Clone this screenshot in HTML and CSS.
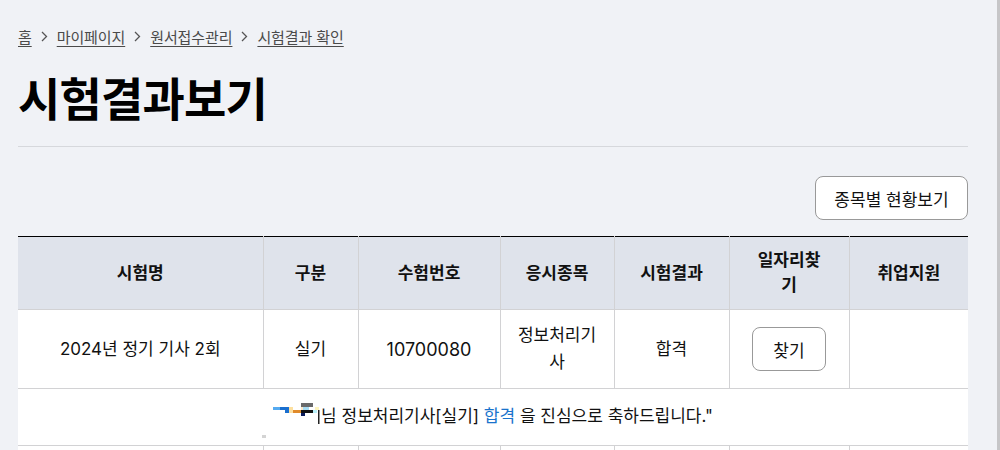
FILE: index.html
```html
<!DOCTYPE html>
<html lang="ko">
<head>
  <meta charset="UTF-8">
  <title>시험결과보기</title>
  <link rel="stylesheet" href="styles.css">
</head>
<body>
<div class="page">
  <div class="container">
    <nav class="breadcrumb">
      <a href="#">홈</a>
      <svg class="chevron" width="7" height="11" viewBox="0 0 7 11"><path d="M1 1l4.5 4.5L1 10" fill="none" stroke="#555" stroke-width="1.3"/></svg>
      <a href="#">마이페이지</a>
      <svg class="chevron" width="7" height="11" viewBox="0 0 7 11"><path d="M1 1l4.5 4.5L1 10" fill="none" stroke="#555" stroke-width="1.3"/></svg>
      <a href="#">원서접수관리</a>
      <svg class="chevron" width="7" height="11" viewBox="0 0 7 11"><path d="M1 1l4.5 4.5L1 10" fill="none" stroke="#555" stroke-width="1.3"/></svg>
      <a href="#">시험결과 확인</a>
    </nav>

    <h1 class="title">시험결과보기</h1>

    <div class="toolbar">
      <button class="btn">종목별 현황보기</button>
    </div>

    <table class="result-table">
      <colgroup>
        <col style="width:245px">
        <col style="width:95px">
        <col style="width:142px">
        <col style="width:114px">
        <col style="width:115px">
        <col style="width:120px">
        <col style="width:119px">
      </colgroup>
      <thead>
        <tr>
          <th>시험명</th>
          <th>구분</th>
          <th>수험번호</th>
          <th>응시종목</th>
          <th>시험결과</th>
          <th>일자리찾기</th>
          <th>취업지원</th>
        </tr>
      </thead>
      <tbody>
        <tr>
          <td>2024년 정기 기사 2회</td>
          <td>실기</td>
          <td class="num">10700080</td>
          <td>정보처리기사</td>
          <td>합격</td>
          <td><button class="btn btn-small">찾기</button></td>
          <td></td>
        </tr>
        <tr>
          <td colspan="7" class="message">
            <svg class="name-mask" width="48" height="26" viewBox="0 0 48 26">
              <rect x="0" y="4" width="7" height="3" fill="#55aaf0"/>
              <rect x="7" y="4" width="9" height="3" fill="#1a6fcf"/>
              <rect x="12" y="7" width="4" height="3" fill="#1a6fcf"/>
              <rect x="16" y="4" width="4" height="6" fill="#fde0a0"/>
              <rect x="20" y="7" width="8" height="3" fill="#e08a2a"/>
              <rect x="28" y="0" width="12" height="4" fill="#6a6a6a"/>
              <rect x="28" y="4" width="2" height="3" fill="#fde8c8"/>
              <rect x="30" y="4" width="6" height="3" fill="#a6dcf4"/>
              <rect x="28" y="7" width="14" height="3" fill="#111"/>
              <rect x="28" y="10" width="4" height="3" fill="#0a1a5a"/>
              <rect x="42" y="4" width="4" height="3" fill="#fff6c0"/>
              <rect x="40" y="7" width="4" height="3" fill="#b8f0fa"/>
              <rect x="45" y="7" width="1.5" height="14" fill="#222"/>
              <rect x="-11" y="32" width="4" height="3" fill="#d4d4d4"/>
            </svg>님 정보처리기사[실기] <span class="pass">합격</span> 을 진심으로 축하드립니다."
          </td>
        </tr>
        <tr class="next-row">
          <td></td><td></td><td></td><td></td><td></td><td></td><td></td>
        </tr>
      </tbody>
    </table>
  </div>
</div>
</body>
</html>
```

FILE: styles.css
```css
body {
  margin: 0;
  padding: 0;
  font-family: "Inter", "Noto Sans CJK KR", sans-serif;
  background-color: #f0f2f6;
  color: #111;
}

.page {
  min-height: 100vh;
  border-right: 3px solid #c6c6c8;
  box-sizing: border-box;
  overflow: hidden;
}

.container {
  width: 950px;
  padding-left: 18px;
}

.breadcrumb {
  display: flex;
  align-items: center;
  gap: 9px;
  padding-top: 26px;
  height: 20px;
  font-size: 15px;
  letter-spacing: -0.1px;
}

.breadcrumb a {
  color: #4a4a4a;
  text-decoration: underline;
  text-underline-offset: 3px;
}

.chevron {
  display: block;
}

.title {
  margin: 24px 0 0;
  padding-bottom: 18px;
  font-size: 46px;
  line-height: 58px;
  font-weight: 700;
  letter-spacing: -0.8px;
  color: #000;
  border-bottom: 1px solid #d6d8dc;
}

.toolbar {
  display: flex;
  justify-content: flex-end;
  margin: 29px 0 16px;
}

.btn {
  height: 44px;
  padding: 0 18px;
  border: 1px solid #999;
  border-radius: 8px;
  background: white;
  font-family: inherit;
  font-size: 17px;
  color: #111;
  cursor: pointer;
}

.toolbar .btn {
  width: 153px;
}

.btn-small {
  width: 74px;
  padding: 0;
}

.result-table {
  width: 950px;
  table-layout: fixed;
  border-collapse: collapse;
  border-top: 1px solid #000;
  background: white;
  font-size: 17px;
}

.result-table th,
.result-table td {
  border: 1px solid #d2d2d4;
  text-align: center;
}

.result-table tr:first-child th {
  border-top: none;
}

.result-table th:first-child,
.result-table td:first-child {
  border-left: none;
}

.result-table th:last-child,
.result-table td:last-child {
  border-right: none;
}

.result-table th {
  background-color: #dfe3eb;
  font-weight: 700;
  padding: 11px 24px;
  line-height: 25px;
  height: 50px;
}

.result-table td {
  padding: 12px 16px;
  line-height: 27px;
  height: 54px;
}

.result-table td.num {
  font-size: 18px;
}

.result-table td.message {
  height: 26px;
  padding: 14px 16px 16px;
  line-height: 26px;
}

.name-mask {
  vertical-align: top;
  overflow: visible;
}

.pass {
  color: #1a73cc;
}

.next-row td {
  height: 40px;
}
```
